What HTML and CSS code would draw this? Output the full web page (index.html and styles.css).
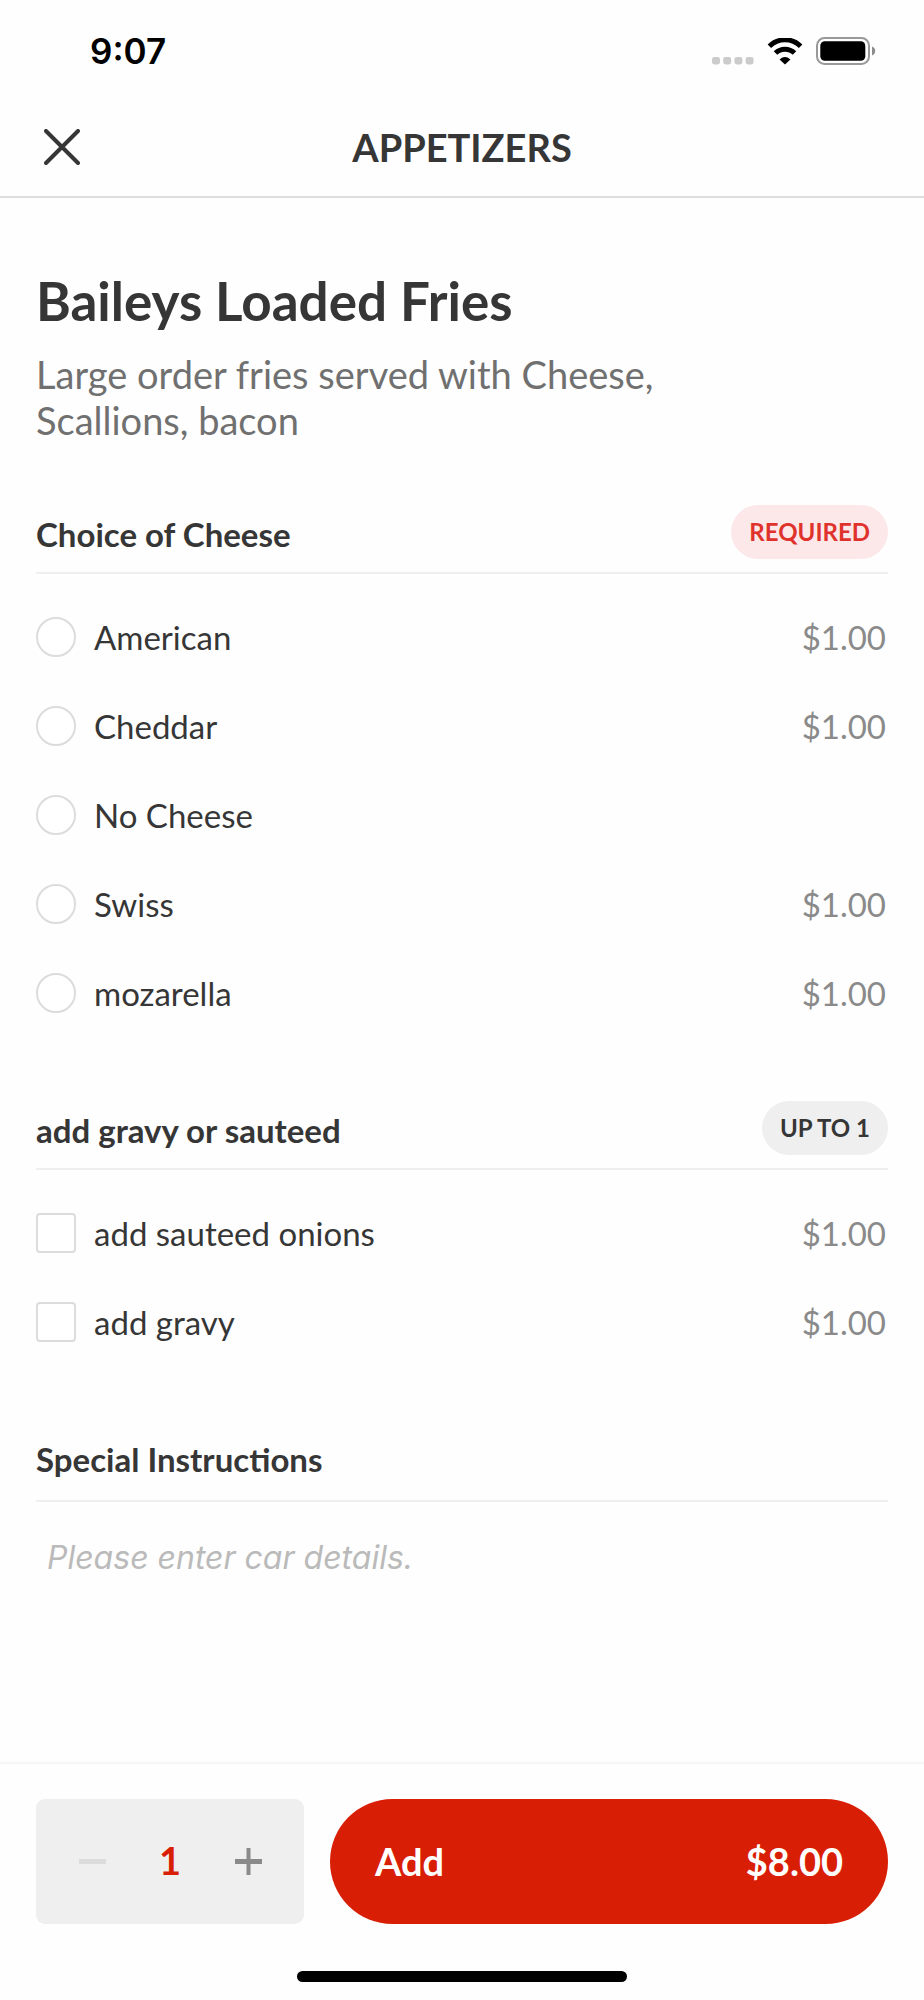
FILE: index.html
```html
<!DOCTYPE html>
<html lang="en">
<head>
<meta charset="utf-8">
<meta name="viewport" content="width=device-width, initial-scale=1">
<title>Baileys Loaded Fries</title>
<link rel="stylesheet" href="styles.css">
</head>
<body class="screen">
<header class="top">
  <div class="status">
    <span class="status-time">9:07</span>
    <div class="status-icons">
      <svg width="42" height="8" viewBox="0 0 42 8" fill="#cbcbcb" aria-hidden="true">
        <rect x="0" width="8" height="7.5" rx="2.4"/><rect x="11.2" width="8" height="7.5" rx="2.4"/><rect x="22.4" width="8" height="7.5" rx="2.4"/><rect x="33.6" width="8" height="7.5" rx="2.4"/>
      </svg>
      <svg class="wifi" width="36" height="27" viewBox="0 0 36 27" aria-hidden="true">
        <path d="M2.4 8.2A22.3 22.3 0 0 1 33.6 8.2" fill="none" stroke="#000" stroke-width="5"/>
        <path d="M8.500 15A13.600 13.600 0 0 1 27.500 15" fill="none" stroke="#000" stroke-width="5"/>
        <path d="M18 26.600L12.600 21.400Q18 16.800 23.400 21.400Z"/>
      </svg>
      <svg width="60" height="28" viewBox="0 0 60 28" aria-hidden="true">
        <rect x="1" y="1" width="52" height="26" rx="7.5" fill="none" stroke="#999" stroke-width="2"/>
        <rect x="4.3" y="4.3" width="45" height="19.4" rx="4.5"/>
        <path d="M56 9.500Q59.200 10.800 59.200 14T56 18.500Z" fill="#8c8c8c"/>
      </svg>
    </div>
  </div>
  <div class="nav">
    <button class="close" type="button" aria-label="Close">
      <svg width="36" height="36" viewBox="0 0 36 36" fill="none" stroke="#363636" stroke-width="4" stroke-linecap="round" aria-hidden="true"><path d="M2 2L34 34M34 2L2 34"/></svg>
    </button>
    <span class="nav-title">APPETIZERS</span>
  </div>
</header>

<main class="content">
  <h1 class="item-name">Baileys Loaded Fries</h1>
  <p class="item-text">Large order fries served with Cheese, Scallions, bacon</p>

  <section class="group">
    <div class="group-head">
      <h2 class="group-title" id="cheese">Choice of Cheese</h2>
      <span class="tag tag-required">REQUIRED</span>
    </div>
    <div class="options" role="radiogroup" aria-labelledby="cheese">
      <label class="option"><input class="mark mark-round" type="radio" name="cheese"><span class="option-name">American</span><span class="price">$1.00</span></label>
      <label class="option"><input class="mark mark-round" type="radio" name="cheese"><span class="option-name">Cheddar</span><span class="price">$1.00</span></label>
      <label class="option"><input class="mark mark-round" type="radio" name="cheese"><span class="option-name">No Cheese</span></label>
      <label class="option"><input class="mark mark-round" type="radio" name="cheese"><span class="option-name">Swiss</span><span class="price">$1.00</span></label>
      <label class="option"><input class="mark mark-round" type="radio" name="cheese"><span class="option-name">mozarella</span><span class="price">$1.00</span></label>
    </div>
  </section>

  <section class="group">
    <div class="group-head">
      <h2 class="group-title" id="extras">add gravy or sauteed</h2>
      <span class="tag">UP TO 1</span>
    </div>
    <div class="options" role="group" aria-labelledby="extras">
      <label class="option"><input class="mark" type="checkbox"><span class="option-name">add sauteed onions</span><span class="price">$1.00</span></label>
      <label class="option"><input class="mark" type="checkbox"><span class="option-name">add gravy</span><span class="price">$1.00</span></label>
    </div>
  </section>

  <section class="group group-notes">
    <div class="group-head">
      <h2 class="group-title"><label for="notes">Special Instructions</label></h2>
    </div>
    <textarea class="notes" id="notes" placeholder="Please enter car details."></textarea>
  </section>
</main>

<footer class="bottom">
  <div class="actions">
    <div class="stepper">
      <button class="step" type="button" aria-label="Decrease quantity" disabled>
        <svg width="27" height="27" viewBox="0 0 27 27" aria-hidden="true"><path d="M0 11h27v5H0z" fill="#dcdcdc"/></svg>
      </button>
      <output class="count">1</output>
      <button class="step" type="button" aria-label="Increase quantity">
        <svg width="27" height="27" viewBox="0 0 27 27" aria-hidden="true"><path d="M0 11h11.500V0h4v11H27v5H15.500v11h-4V16H0z" fill="#8a8a8a"/></svg>
      </button>
    </div>
    <button class="add" type="button"><span>Add</span><span>$8.00</span></button>
  </div>
  <div class="home"></div>
</footer>
</body>
</html>
```
FILE: styles.css
```css
* {
  box-sizing: border-box;
}

.screen {
  margin: 0;
  min-height: 100vh;
  display: flex;
  flex-direction: column;
  background: #fefefe;
  color: #363636;
  font-family: Lato, "Liberation Sans", sans-serif;
}

button {
  border: 0;
  padding: 0;
  background: none;
  font: inherit;
  color: inherit;
}

svg {
  display: block;
}

.top {
  border-bottom: 2px solid #dedede;
}

.status {
  display: flex;
  justify-content: space-between;
  align-items: center;
  height: 100px;
  padding: 2px 48px 0 90px;
}

.status-time {
  color: #000;
  font: 600 35px/40px Inter, "Liberation Sans", sans-serif;
}

.status-icons {
  display: flex;
  align-items: flex-end;
  gap: 13px;
}

.nav {
  display: grid;
  grid-template-columns: 1fr auto 1fr;
  align-items: center;
  height: 96px;
  padding: 0 44px 3px;
}

.close {
  justify-self: start;
}

.nav-title {
  font-size: 38px;
  font-weight: 700;
  line-height: 46px;
}

.content {
  flex: 1;
  padding: 71px 36px 0;
}

.item-name {
  margin: 0 0 18px;
  font-size: 53px;
  font-weight: 700;
  line-height: 64px;
}

.item-text {
  max-width: 680px;
  margin: 0;
  color: #707070;
  font-size: 38px;
  line-height: 46px;
}

.group {
  margin-top: 62px;
}

.group-notes {
  margin-top: 66px;
}

.group-head {
  display: flex;
  justify-content: space-between;
  align-items: flex-end;
  padding-bottom: 13px;
  border-bottom: 2px solid #efefef;
}

.group-notes .group-head {
  padding-bottom: 16px;
}

.group-title {
  margin: 0;
  font-size: 33px;
  font-weight: 700;
  line-height: 50px;
}

.tag {
  padding: 0 18px;
  border-radius: 27px;
  background: #efefef;
  font-size: 24px;
  font-weight: 700;
  line-height: 54px;
}

.tag-required {
  background: #fde8e9;
  color: #e0322c;
}

.options {
  padding: 18px 0 2px;
}

.option {
  display: flex;
  align-items: center;
  gap: 18px;
  height: 89px;
  padding-right: 2px;
  font-size: 33px;
  line-height: 40px;
}

.option-name {
  flex: 1;
}

.mark {
  appearance: none;
  width: 40px;
  height: 40px;
  margin: 0;
  border: 2px solid #dcdcdc;
  border-radius: 4px;
  background: #fff;
}

.mark-round {
  border-radius: 50%;
}

.price {
  color: #8a8a8a;
}

.notes {
  display: block;
  width: 100%;
  height: 160px;
  padding: 36px 11px;
  border: 0;
  outline: 0;
  resize: none;
  background: none;
  color: #363636;
  font: italic 400 32px/40px Inter, "Liberation Sans", sans-serif;
}

.notes::placeholder {
  color: #bababa;
  opacity: 1;
}

.bottom {
  padding: 35px 36px 18px;
  border-top: 2px solid #f6f6f6;
}

.actions {
  display: flex;
  gap: 26px;
  height: 125px;
}

.stepper {
  display: grid;
  grid-template-columns: repeat(3, 1fr);
  width: 268px;
  padding: 0 17px;
  border-radius: 9px;
  background: #efefef;
}

.step {
  display: flex;
  align-items: center;
  justify-content: center;
}

.count {
  align-self: center;
  padding-bottom: 3px;
  color: #d91e06;
  font-size: 38px;
  font-weight: 700;
  line-height: 46px;
  text-align: center;
}

.add {
  flex: 1;
  display: flex;
  justify-content: space-between;
  align-items: center;
  padding: 0 45px 2px;
  border-radius: 63px;
  background: #d91e06;
  color: #fff;
  font-size: 38px;
  font-weight: 700;
  line-height: 46px;
}

.home {
  width: 330px;
  height: 11px;
  margin: 47px auto 0;
  border-radius: 6px;
  background: #000;
}
```
